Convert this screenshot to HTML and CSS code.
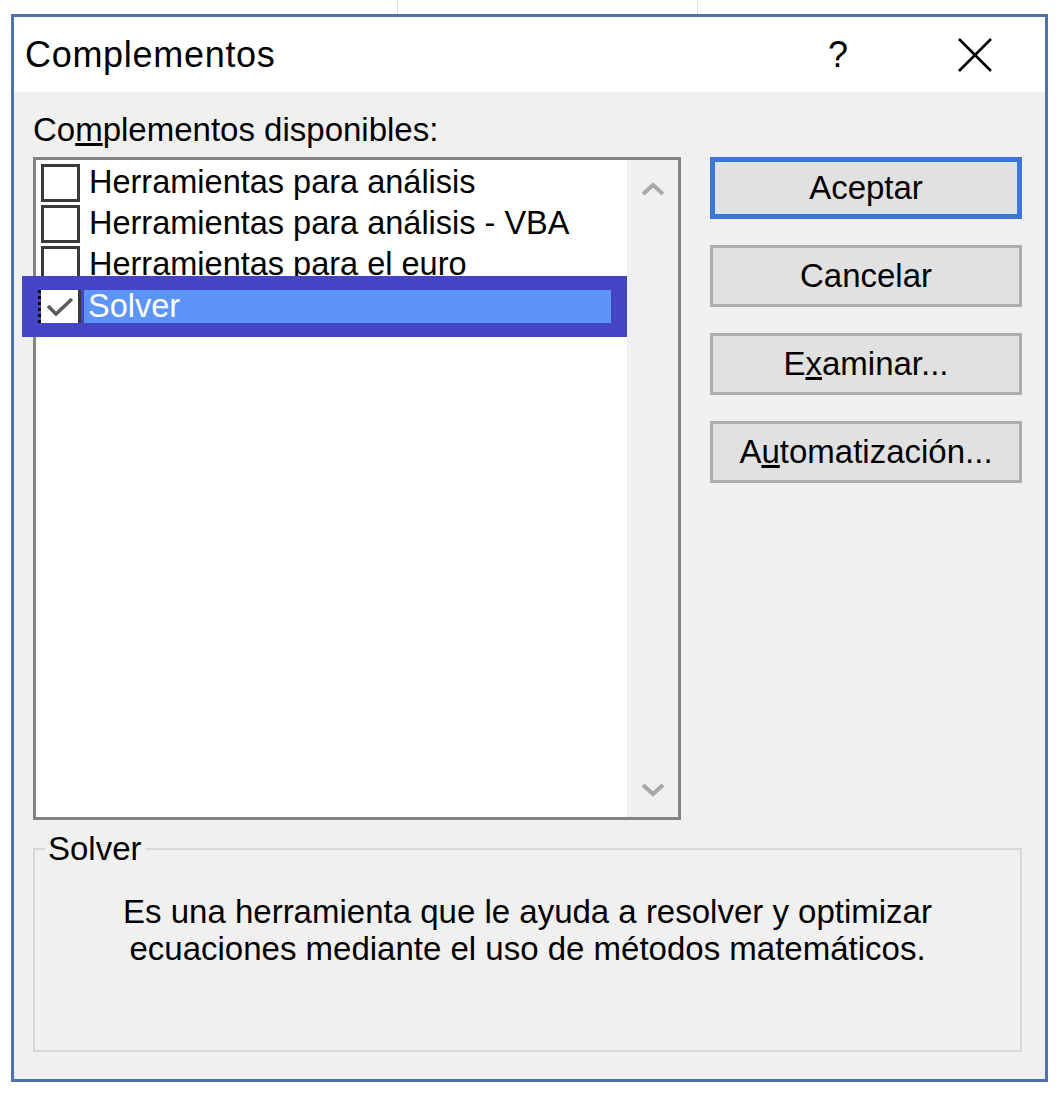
FILE: index.html
```html
<!DOCTYPE html>
<html lang="es">
<head>
<meta charset="utf-8">
<title>Complementos</title>
<link rel="stylesheet" href="styles.css">
</head>
<body>
<div class="dialog">
  <div class="titlebar">
    <span class="title">Complementos</span>
    <div class="controls">
      <span class="help">?</span>
      <span class="close">
        <svg width="36" height="36" viewBox="0 0 36 36"><path d="M2 2 L34 34 M34 2 L2 34" stroke="#000" stroke-width="2.6" fill="none"/></svg>
      </span>
    </div>
  </div>
  <div class="body">
    <div class="main">
      <div class="left">
        <div class="label">Co<u>m</u>plementos disponibles:</div>
        <div class="listbox">
          <div class="items">
            <div class="row"><span class="cb"></span><span class="txt">Herramientas para análisis</span></div>
            <div class="row"><span class="cb"></span><span class="txt">Herramientas para análisis - VBA</span></div>
            <div class="row"><span class="cb"></span><span class="txt">Herramientas para el euro</span></div>
            <div class="row-sel">
              <span class="focus"></span>
              <span class="cb-on">
                <svg width="34" height="28" viewBox="0 0 34 28"><path d="M5 13 L13 21 L29 6" stroke="#5a5a5a" stroke-width="3.5" fill="none"/></svg>
              </span>
              <span class="sel-txt">Solver</span>
            </div>
          </div>
          <div class="scroll">
            <svg width="24" height="14" viewBox="0 0 24 14"><path d="M2 12 L12 3 L22 12" stroke="#a8a8a8" stroke-width="4" fill="none"/></svg>
            <svg width="24" height="14" viewBox="0 0 24 14"><path d="M2 2 L12 11 L22 2" stroke="#a8a8a8" stroke-width="4" fill="none"/></svg>
          </div>
        </div>
      </div>
      <div class="buttons">
        <div class="btn default">Aceptar</div>
        <div class="btn">Cancelar</div>
        <div class="btn">E<u>x</u>aminar...</div>
        <div class="btn">A<u>u</u>tomatización...</div>
      </div>
    </div>
    <fieldset class="group">
      <legend>Solver</legend>
      <p class="desc">Es una herramienta que le ayuda a resolver y optimizar<br>ecuaciones mediante el uso de métodos matemáticos.</p>
    </fieldset>
  </div>
</div>
</body>
</html>
```

FILE: styles.css
```css
html {
  background-color: #ffffff;
  background-image:
    linear-gradient(to right, transparent 397px, #dedede 397px, #dedede 398px, transparent 398px),
    linear-gradient(to right, transparent 697px, #dedede 697px, #dedede 698px, transparent 698px);
  background-size: 100% 14px, 100% 14px;
  background-repeat: no-repeat;
}
body {
  margin: 0;
  font-family: "Liberation Sans", Arial, sans-serif;
  font-size: 33px;
  color: #000;
}
.dialog {
  box-sizing: border-box;
  margin: 14px 0 0 11px;
  width: 1037px;
  height: 1068px;
  border: 3px solid #4e72ad;
  display: flex;
  flex-direction: column;
  background: #f0f0f0;
}
.titlebar {
  height: 75px;
  flex: none;
  background: #ffffff;
  display: flex;
  align-items: center;
  padding-left: 11px;
}
.title {
  font-size: 36px;
  letter-spacing: 0.7px;
}
.controls {
  margin-left: auto;
  display: flex;
  align-items: center;
  height: 100%;
}
.help {
  width: 120px;
  padding-right: 14px;
  box-sizing: border-box;
  text-align: center;
  font-size: 36px;
}
.close {
  width: 140px;
  display: flex;
  justify-content: center;
  align-items: center;
}
.body {
  flex: 1;
  padding: 19px 0 0 19px;
}
.main {
  display: grid;
  grid-template-columns: 648px 312px;
  column-gap: 29px;
}
.label {
  height: 46px;
  line-height: 38px;
}
.listbox {
  box-sizing: border-box;
  height: 663px;
  border: 3px solid #838383;
  background: #ffffff;
  display: flex;
}
.items {
  flex: 1;
  padding-top: 2px;
  font-size: 32.5px;
}
.row {
  display: flex;
  align-items: center;
  height: 41px;
  padding-left: 5px;
  gap: 9px;
  line-height: 41px;
}
.cb {
  box-sizing: border-box;
  width: 39px;
  height: 38px;
  border: 3px solid #3a3a3a;
  background: #fff;
  flex: none;
}
.row-sel {
  position: relative;
  box-sizing: border-box;
  margin-top: -9px;
  margin-left: -14px;
  height: 61px;
  background: #4444c4;
  display: flex;
  align-items: center;
  padding: 0 16px 0 16px;
}
.focus {
  width: 0;
  height: 33px;
  border-left: 3px dotted #000;
  flex: none;
}
.cb-on {
  box-sizing: border-box;
  width: 40px;
  height: 33px;
  background: #fff;
  border-right: 3px solid #3a3a3a;
  display: flex;
  align-items: center;
  justify-content: center;
  flex: none;
}
.sel-txt {
  margin-left: 3px;
  flex: 1;
  height: 33px;
  line-height: 33px;
  background: #5c95f7;
  color: #ffffff;
  padding-left: 4px;
}
.scroll {
  width: 51px;
  background: #f0f0f0;
  display: flex;
  flex-direction: column;
  justify-content: space-between;
  align-items: center;
  padding: 22px 0 20px;
}
.buttons {
  padding-top: 46px;
  display: flex;
  flex-direction: column;
  gap: 26px;
}
.btn {
  box-sizing: border-box;
  height: 62px;
  border: 3px solid #adadad;
  background: #e1e1e1;
  display: flex;
  align-items: center;
  justify-content: center;
}
.btn.default {
  border: 5px solid #3d76d7;
  box-shadow: inset 0 0 0 2px #d7e5f8;
}
.group {
  box-sizing: border-box;
  width: 989px;
  height: 222px;
  margin: 10px 0 0 0;
  padding: 0 10px;
  border: 2px solid #d8d8d8;
  min-width: 0;
}
.group legend {
  padding: 0 3px;
  line-height: 37px;
}
.desc {
  margin: 26px 0 0;
  text-align: center;
  line-height: 37px;
}
```
